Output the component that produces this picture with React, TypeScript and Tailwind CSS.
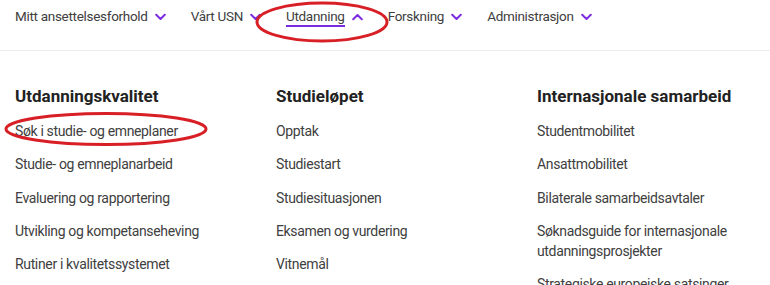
import React from "react";

const Chevron = ({ up = false }: { up?: boolean }) => (
  <svg width="11" height="8" viewBox="0 0 11 8" className="ml-[7px]" fill="none">
    {up ? (
      <path d="M1.2 6.3 L5.5 2 L9.8 6.3" stroke="#7b2be0" strokeWidth="2" strokeLinecap="round" strokeLinejoin="round" />
    ) : (
      <path d="M1.2 1.7 L5.5 6 L9.8 1.7" stroke="#7b2be0" strokeWidth="2" strokeLinecap="round" strokeLinejoin="round" />
    )}
  </svg>
);

const nav = [
  { label: "Mitt ansettelsesforhold" },
  { label: "Vårt USN" },
  { label: "Utdanning", active: true },
  { label: "Forskning" },
  { label: "Administrasjon" },
];

const cols = [
  {
    title: "Utdanningskvalitet",
    items: [
      "Søk i studie- og emneplaner",
      "Studie- og emneplanarbeid",
      "Evaluering og rapportering",
      "Utvikling og kompetanseheving",
      "Rutiner i kvalitetssystemet",
    ],
  },
  {
    title: "Studieløpet",
    items: ["Opptak", "Studiestart", "Studiesituasjonen", "Eksamen og vurdering", "Vitnemål"],
  },
  {
    title: "Internasjonale samarbeid",
    items: [
      "Studentmobilitet",
      "Ansattmobilitet",
      "Bilaterale samarbeidsavtaler",
      "Søknadsguide for internasjonale utdanningsprosjekter",
      "Strategiske europeiske satsinger",
    ],
  },
];

export default function App() {
  return (
    <div
      className="relative w-[770px] h-[285px] overflow-hidden bg-white text-[#404040]"
      style={{ fontFamily: "Roboto, 'Noto Sans', sans-serif" }}
    >
      <nav className="flex items-center h-[51px] pl-[15px] pb-[16px] border-b border-[#ececec] text-[13.5px] tracking-[-0.3px]">
        {nav.map((n, i) => (
          <div key={i} className="flex items-center mr-[25px]">
            <span
              className={
                n.active
                  ? "border-b-2 border-[#7b2be0] leading-[17px] pt-[1px]"
                  : "leading-[17px] pt-[1px] pb-[2px]"
              }
            >
              {n.label}
            </span>
            <Chevron up={n.active} />
          </div>
        ))}
      </nav>
      <div className="flex pl-[15px] pt-[35px]">
        {cols.map((c, i) => (
          <div key={i} className={i === 2 ? "w-[220px]" : "w-[261px]"}>
            <h2 className="text-[17px] font-bold text-[#222] leading-[20px] mb-[15px]">{c.title}</h2>
            <ul className="flex flex-col gap-[13.3px] text-[14px] leading-[20px] tracking-[-0.35px]">
              {c.items.map((it, j) => (
                <li key={j}>{it}</li>
              ))}
            </ul>
          </div>
        ))}
      </div>
      <svg className="absolute left-0 top-0 pointer-events-none" width="770" height="285">
        <ellipse cx="322" cy="22" rx="65" ry="19" fill="none" stroke="#d81f26" strokeWidth="3" />
        <ellipse cx="106" cy="129" rx="100" ry="15.5" fill="none" stroke="#d81f26" strokeWidth="3" />
      </svg>
    </div>
  );
}
